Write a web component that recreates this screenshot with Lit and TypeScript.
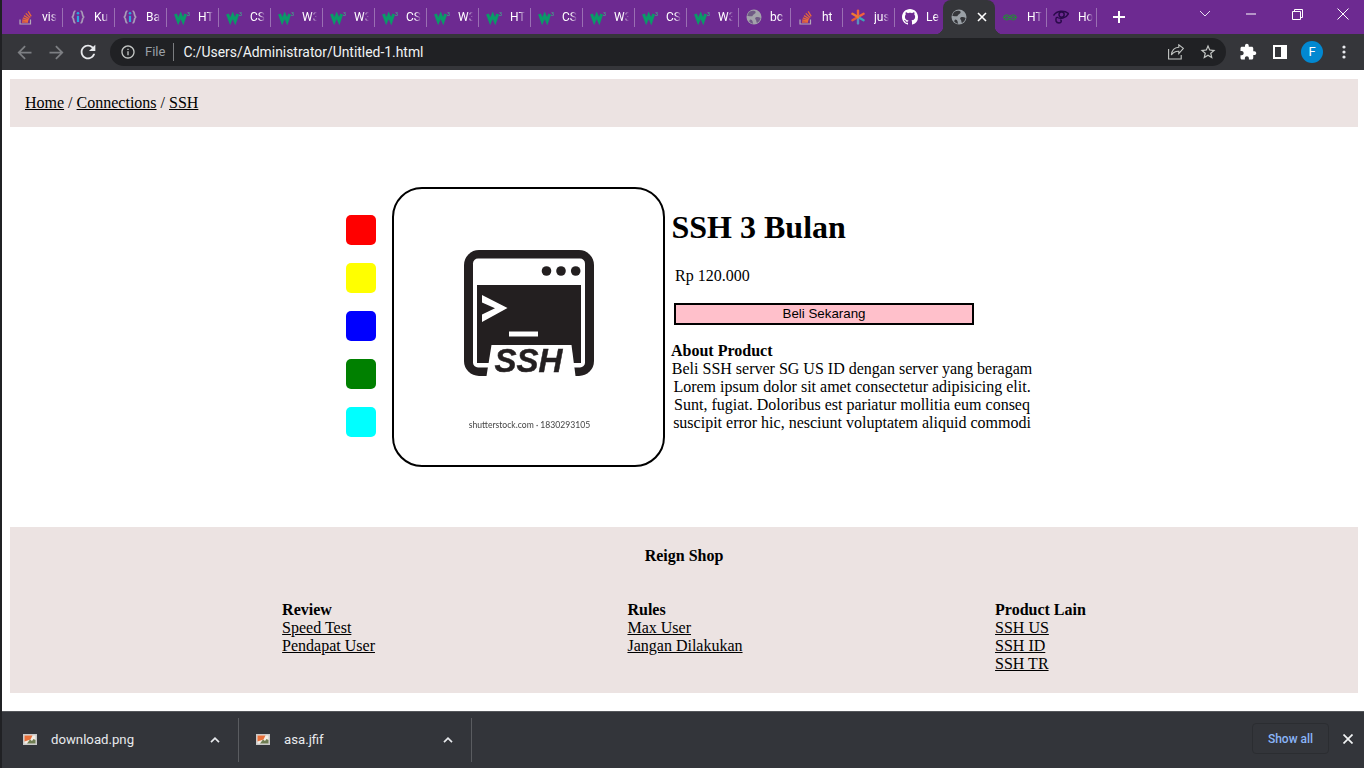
import { html, svg, css, LitElement } from 'lit'
import { customElement } from 'lit/decorators.js'

const p = (d: string, size = 16) =>
  html`<svg class="ico" width=${size} height=${size} viewBox="0 0 24 24" fill="currentColor"><path d=${d}></path></svg>`

const BACK = 'M20 11H7.83l5.59-5.59L12 4l-8 8 8 8 1.41-1.41L7.83 13H20v-2z'
const FORWARD = 'M12 4l-1.41 1.41L16.17 11H4v2h12.17l-5.58 5.59L12 20l8-8z'
const RELOAD =
  'M17.65 6.35A7.958 7.958 0 0012 4c-4.42 0-7.99 3.58-7.99 8s3.57 8 7.99 8c3.73 0 6.84-2.55 7.73-6h-2.08A5.99 5.99 0 0112 18c-3.31 0-6-2.69-6-6s2.69-6 6-6c1.66 0 3.14.69 4.22 1.78L13 11h7V4l-2.35 2.35z'
const INFO =
  'M11 7h2v2h-2zm0 4h2v6h-2zm1-9C6.48 2 2 6.48 2 12s4.48 10 10 10 10-4.48 10-10S17.52 2 12 2zm0 18c-4.41 0-8-3.59-8-8s3.59-8 8-8 8 3.59 8 8-3.59 8-8 8z'
const STAR =
  'M22 9.24l-7.19-.62L12 2 9.19 8.63 2 9.24l5.46 4.73L5.82 21 12 17.27 18.18 21l-1.63-7.03L22 9.24zM12 15.4l-3.76 2.27 1-4.28-3.32-2.88 4.38-.38L12 6.1l1.71 4.04 4.38.38-3.32 2.88 1 4.28L12 15.4z'
const PUZZLE =
  'M20.5 11H19V7c0-1.1-.9-2-2-2h-4V3.5C13 2.12 11.88 1 10.5 1S8 2.12 8 3.5V5H4c-1.1 0-1.99.9-1.99 2v3.8H3.5c1.49 0 2.7 1.21 2.7 2.7s-1.21 2.7-2.7 2.7H2V20c0 1.1.9 2 2 2h3.8v-1.5c0-1.49 1.21-2.7 2.7-2.7 1.49 0 2.7 1.21 2.7 2.7V22H17c1.1 0 2-.9 2-2v-4h1.5c1.38 0 2.5-1.12 2.5-2.5S21.88 11 20.5 11z'
const GITHUB =
  'M8 0C3.58 0 0 3.58 0 8c0 3.54 2.29 6.53 5.47 7.59.4.07.55-.17.55-.38 0-.19-.01-.82-.01-1.49-2.01.37-2.53-.49-2.69-.94-.09-.23-.48-.94-.82-1.13-.28-.15-.68-.52-.01-.53.63-.01 1.08.58 1.23.82.72 1.21 1.87.87 2.33.66.07-.52.28-.87.51-1.07-1.78-.2-3.64-.89-3.64-3.95 0-.87.31-1.59.82-2.15-.08-.2-.36-1.02.08-2.12 0 0 .67-.21 2.2.82.64-.18 1.32-.27 2-.27.68 0 1.36.09 2 .27 1.53-1.04 2.2-.82 2.2-.82.44 1.1.16 1.92.08 2.12.51.56.82 1.27.82 2.15 0 3.07-1.87 3.75-3.65 3.95.29.25.54.73.54 1.48 0 1.07-.01 1.93-.01 2.2 0 .21.15.46.55.38A8.013 8.013 0 0016 8c0-4.42-3.58-8-8-8z'

const LAND =
  'M4 2.4C6 1.6 9 1.6 9.6 3 9.8 5 7 5 6.6 7 5 8 3 6.6 1.4 7 1.6 5 2.6 3.4 4 2.4zM9.6 8.4c1.6-.8 3.6-.4 5 .6-.4 2.2-1.8 4-3.6 5-.8-1-.4-2.6-1.4-3.6-.6-.6-.6-1.4 0-2zM4.4 10.6c1 0 2 .8 2.2 2 .1 1 .4 1.6.6 2.2-1.6-.2-3-1-4-2.2.2-.8.4-1.600 1.2-2z'

const favicons: Record<string, unknown> = {
  so: svg`<path d="M2 10.500V15h10.500v-4.500" fill="none" stroke="#b5a9b8" stroke-width="1.200"/>
    <path d="M4 13h6M4.200 11l6 .8M4.800 8.800l5.800 2M6 6.600l5.200 3.200M7.800 4.400l4.400 4.200M10.200 2.400l3 5" fill="none" stroke="#e8683a" stroke-width="1.300"/>`,
  json: svg`<path d="M5.500 2C2.500 2 4.800 7.400 1.800 8c3 .6.700 6 3.700 6M10.500 2c3 0 .7 5.400 3.700 6-3 .6-.7 6-3.700 6" fill="none" stroke="#a99bb8" stroke-width="1.700"/>
    <path d="M8 6.800V13" stroke="#2aa5de" stroke-width="2.200"/><circle cx="8" cy="4.300" r="1.300" fill="#2aa5de"/>`,
  w3: svg`<path d="M1.500 5l2.700 7.200 2.500-5.800 2.500 5.800L11.700 5" fill="none" stroke="#0a9a68" stroke-width="3"/>
    <text x="13" y="6.500" font-size="5.500" fill="#3fae8c" font-family="Liberation Sans, sans-serif">3</text>`,
  globe: svg`<circle cx="8" cy="8" r="7.500" fill="#a3a3ab"/><path d="${LAND}" fill="#6f5a85"/>`,
  activeGlobe: svg`<circle cx="8" cy="8" r="7.500" fill="#9aa0a6"/><path d="${LAND}" fill="#35363a"/>`,
  star: svg`<g stroke-width="2.400" stroke-linecap="round"><path d="M8 8V1.600" stroke="#f0643c"/><path d="M8 8l5.600-3.200" stroke="#f2603e"/><path d="M8 8l5.600 3.200" stroke="#3aa5b8"/><path d="M8 8v6.400" stroke="#5a8fc0"/><path d="M8 8l-5.600 3.200" stroke="#e25a3a"/><path d="M8 8L2.400 4.800" stroke="#f07a30"/></g>`,
  github: svg`<path d="${GITHUB}" fill="#fff"/>`,
  gfg: svg`<path d="M8 8.300C6.800 5 2.800 5 1.600 8.300h12.800C13.200 5 9.200 5 8 8.300c1.200 3.300 5.200 3.300 6.400 0M8 8.300c-1.200 3.300-5.200 3.300-6.400 0" fill="none" stroke="#2e7d45" stroke-width="1.200"/>`,
  eye: svg`<g fill="none" stroke="#2a0a4a" stroke-width="1.500"><path d="M.5 6.500C4 1.500 11 1 15.500 4.500 13 9.500 7 10.500 3.600 8"/><circle cx="8.600" cy="5.600" r="2.600"/><path d="M3.600 8C2 11 3 14 6 14c2.400 0 3-2.400 1.400-3.400"/></g>`,
}

const tabs = [
  ['so', 'vis'],
  ['json', 'Ku'],
  ['json', 'Ba'],
  ['w3', 'HT'],
  ['w3', 'CS'],
  ['w3', 'W3'],
  ['w3', 'W3'],
  ['w3', 'CS'],
  ['w3', 'W3'],
  ['w3', 'HT'],
  ['w3', 'CS'],
  ['w3', 'W3'],
  ['w3', 'CS'],
  ['w3', 'W3'],
  ['globe', 'bc'],
  ['so', 'ht'],
  ['star', 'jus'],
  ['github', 'Le'],
]

@customElement('browser-chrome')
export class BrowserChrome extends LitElement {
  favicon(name: string) {
    return html`<svg class="fav" width="16" height="16" viewBox="0 0 16 16">${favicons[name]}</svg>`
  }

  tab(icon: string, label: string, extra = '') {
    return html`<div class="tab ${extra}">${this.favicon(icon)}<span class="label">${label}</span></div>`
  }

  render() {
    return html`
      <div class="strip">
        ${tabs.map(([i, l], n) => this.tab(i, l, n === tabs.length - 1 ? 'last' : ''))}
        <div class="tab active">
          ${this.favicon('activeGlobe')}
          <svg class="tab-x" width="10" height="10" viewBox="0 0 10 10"><path d="M1 1l8 8M9 1l-8 8" stroke="#fff" stroke-width="1.600"/></svg>
        </div>
        ${this.tab('gfg', 'HT', 'w51')} ${this.tab('eye', 'Ho', 'w50')}
        <svg class="plus" width="14" height="14" viewBox="0 0 14 14"><path d="M7 1v12M1 7h12" stroke="#fff" stroke-width="2"/></svg>
        <div class="controls">
          <span><svg width="12" height="8" viewBox="0 0 12 8"><path d="M1 1l5 5 5-5" fill="none" stroke="#e8dff0" stroke-width="1"/></svg></span>
          <span><svg width="10" height="2" viewBox="0 0 10 2"><path d="M0 1h10" stroke="#fff"/></svg></span>
          <span><svg width="11" height="11" viewBox="0 0 11 11" fill="none" stroke="#fff"><path d="M.5 2.500h8v8h-8zM2.500 2.500v-2h8v8h-2"/></svg></span>
          <span><svg width="12" height="12" viewBox="0 0 12 12"><path d="M.5.500l11 11M11.500.500l-11 11" stroke="#fff"/></svg></span>
        </div>
      </div>
      <div class="toolbar">
        <span class="btn dim">${p(BACK, 21)}</span>
        <span class="btn dim">${p(FORWARD, 21)}</span>
        <span class="btn">${p(RELOAD, 22)}</span>
        <div class="omnibox">
          <span class="info">${p(INFO, 16)}</span>
          <span class="file">File</span>
          <span class="url">C:/Users/Administrator/Untitled-1.html</span>
          <span class="btn share">
            <svg width="16" height="16" viewBox="0 0 16 16" fill="none" stroke="#c4c7c5" stroke-width="1.100"><path d="M.6 5v10h12.600v-4"/><path d="M15.400 4.400L10.800.8v2.400C6 3.400 3.800 6.400 3.400 11c1.800-2.800 4-4 7.400-3.800v2.400z"/></svg>
          </span>
          <span class="btn star">${p(STAR, 18)}</span>
        </div>
        <span class="btn bright first">${p(PUZZLE, 18)}</span>
        <span class="btn bright">
          <svg width="14" height="14" viewBox="0 0 14 14"><path d="M0 0h14v14H0z" fill="#fff"/><path d="M2 2h6v10H2z" fill="#35363a"/></svg>
        </span>
        <span class="btn"><span class="avatar">F</span></span>
        <span class="btn"><svg width="4" height="14" viewBox="0 0 4 14" fill="#e8eaed"><circle cx="2" cy="2" r="1.600"/><circle cx="2" cy="7" r="1.600"/><circle cx="2" cy="12" r="1.600"/></svg></span>
      </div>
    `
  }

  static styles = css`
    :host {
      display: block;
      font-family: Roboto, sans-serif;
    }
    .strip {
      display: flex;
      align-items: center;
      height: 34px;
      background: #6d2a91;
      padding-left: 8px;
      overflow: hidden;
    }
    .tab {
      display: flex;
      align-items: center;
      flex: 0 0 52px;
      box-sizing: border-box;
      height: 34px;
      padding-left: 8px;
      position: relative;
      color: #fff;
      font-size: 12px;
    }
    .tab::after {
      content: '';
      position: absolute;
      right: -1px;
      top: 8px;
      height: 19px;
      width: 1px;
      background: #9a6fb3;
    }
    .tab.last::after,
    .tab.active::after {
      display: none;
    }
    .fav {
      flex: none;
    }
    .label {
      margin-left: 8px;
      white-space: nowrap;
      -webkit-mask-image: linear-gradient(to right, #000 9px, transparent 15px);
      mask-image: linear-gradient(to right, #000 9px, transparent 15px);
    }
    .tab.active {
      margin-left: -3px;
      background: #35363a;
      border-radius: 8px 8px 0 0;
      z-index: 1;
    }
    .tab.active::before {
      content: '';
      position: absolute;
      left: -8px;
      right: -8px;
      bottom: 0;
      height: 8px;
      z-index: -1;
      background:
        radial-gradient(circle at 0 0, #6d2a91 8px, transparent 8.5px) 0 0 / 8px 8px no-repeat,
        radial-gradient(circle at 100% 0, #6d2a91 8px, transparent 8.5px) 100% 0 / 8px 8px no-repeat,
        linear-gradient(#35363a, #35363a);
    }
    .tab-x {
      margin-left: 10px;
    }
    .tab.w51,
    .tab.w50 {
      padding-left: 7px;
    }
    .tab.w51 {
      flex-basis: 51px;
    }
    .tab.w50 {
      flex-basis: 50px;
    }
    .w51 .label,
    .w50 .label {
      margin-left: 9px;
    }
    .plus {
      margin-left: 16px;
    }
    .controls {
      display: flex;
      margin-left: auto;
      margin-right: -2px;
      margin-top: -6px;
    }
    .controls span {
      display: flex;
      align-items: center;
      justify-content: center;
      width: 46px;
      height: 28px;
    }
    .toolbar {
      display: flex;
      align-items: center;
      height: 36px;
      box-sizing: border-box;
      padding: 0 4px 0 6px;
      background: #35363a;
      color: #e8eaed;
    }
    .btn {
      display: flex;
      align-items: center;
      justify-content: center;
      flex: 0 0 32px;
      height: 28px;
    }
    .btn.dim {
      color: #7d7f83;
    }
    .btn.bright {
      color: #fff;
    }
    .btn.first {
      margin-left: 6px;
    }
    .omnibox {
      display: flex;
      align-items: center;
      flex: 1;
      height: 28px;
      margin-left: 6px;
      padding: 0 2px 0 10px;
      border-radius: 14px;
      background: #202124;
      font-size: 14px;
    }
    .info {
      display: flex;
      color: #c4c7c5;
    }
    .file {
      margin-left: 9px;
      padding-right: 8px;
      border-right: 1px solid #7b7d80;
      color: #9aa0a6;
      line-height: 18px;
      font-size: 13px;
    }
    .url {
      flex: 1;
      margin-left: 9px;
      color: #f1f3f4;
      font-size: 13.9px;
    }
    .star {
      color: #c4c7c5;
    }
    .avatar {
      width: 22px;
      height: 22px;
      border-radius: 50%;
      background: #0288d1;
      color: #fff;
      font-size: 13px;
      line-height: 22px;
      text-align: center;
    }
    .ico {
      display: block;
    }
  `
}

@customElement('download-bar')
export class DownloadBar extends LitElement {
  item(name: string) {
    return html`
      <div class="item">
        <svg class="thumb" width="14" height="11" viewBox="0 0 14 11">
          <path d="M0 0h14v11H0z" fill="#c9c9c9" />
          <path d="M1.500 1.500h11v8h-11z" fill="#f3ede4" />
          <path d="M1.500 1.500h8l-2 4-6 2z" fill="#e8703a" />
          <path d="M4 9.500l3-4 2 1.500 1.500-2 2 1v3.500z" fill="#6e7d52" />
        </svg>
        <span class="name">${name}</span>
        <svg class="chev" width="10" height="6" viewBox="0 0 10 6"><path d="M1 5.200l4-4 4 4" fill="none" stroke="#e8eaed" stroke-width="1.700" /></svg>
      </div>
    `
  }

  render() {
    return html`
      ${this.item('download.png')} ${this.item('asa.jfif')}
      <button>Show all</button>
      <svg class="close" width="10" height="10" viewBox="0 0 10 10"><path d="M.5.500l9 9M9.500.500l-9 9" stroke="#f1f3f4" stroke-width="1.700" /></svg>
    `
  }

  static styles = css`
    :host {
      display: flex;
      align-items: center;
      box-sizing: border-box;
      height: 57px;
      padding-left: 4px;
      background: #33353a;
      border-top: 1px solid #55575b;
      font-family: Roboto, sans-serif;
      color: #e8eaed;
    }
    .item {
      display: flex;
      align-items: center;
      position: relative;
      box-sizing: border-box;
      flex: 0 0 233px;
      height: 44px;
      padding-left: 17px;
      border-right: 1px solid #5a5c60;
    }
    .thumb {
      flex: none;
      margin-top: -2px;
    }
    .name {
      margin-left: 14px;
      font-size: 13.2px;
    }
    .chev {
      position: absolute;
      left: 204px;
      top: 19px;
    }
    button {
      margin-left: auto;
      margin-top: -3px;
      width: 77px;
      height: 31px;
      background: transparent;
      border: 1px solid #2b2d31;
      border-radius: 4px;
      color: #8ab4f8;
      font: 500 12px Roboto, sans-serif;
    }
    .close {
      margin: -2px 11px 0 14px;
    }
  `
}

@customElement('app-root')
export class AppRoot extends LitElement {
  swatches = ['red', 'yellow', 'blue', 'green', 'cyan']

  footer = [
    ['Review', 'Speed Test', 'Pendapat User'],
    ['Rules', 'Max User', 'Jangan Dilakukan'],
    ['Product Lain', 'SSH US', 'SSH ID', 'SSH TR'],
  ]

  render() {
    return html`
      <browser-chrome></browser-chrome>
      <main>
        <nav><a href="#">Home</a> / <a href="#">Connections</a> / <a href="#">SSH</a></nav>
        <section class="product">
          <div class="swatches">
            ${this.swatches.map((c) => html`<span style="background:${c}"></span>`)}
          </div>
          <div class="picture">
            <svg viewBox="394 189 269 276" width="269" height="276">
              <rect x="464" y="250" width="130" height="126" rx="15" fill="#231f20" />
              <rect x="473" y="258.500" width="112" height="109" rx="5" fill="#fff" />
              <path d="M477 285h104v78H477z" fill="#231f20" />
              <circle cx="546.500" cy="271" r="4.800" fill="#231f20" />
              <circle cx="561" cy="271" r="4.800" fill="#231f20" />
              <circle cx="575.700" cy="271" r="4.800" fill="#231f20" />
              <path d="M482 295l25.500 13L482 322v-7.500l13-6.200-13-5.800z" fill="#fff" />
              <path d="M509 331.500h29v5h-29z" fill="#fff" />
              <path d="M491.500 345h80l4 31h-89z" fill="#fff" />
              <text x="494.500" y="372" class="logo-text">SSH</text>
              <text x="529.500" y="428" class="stock">shutterstock.com · 1830293105</text>
            </svg>
          </div>
          <div class="info">
            <h1>SSH 3 Bulan</h1>
            <p class="price">Rp 120.000</p>
            <button>Beli Sekarang</button>
            <div class="about">
              <b>About Product</b>
              <p>
                Beli SSH server SG US ID dengan server yang beragam<br />
                Lorem ipsum dolor sit amet consectetur adipisicing elit.<br />
                Sunt, fugiat. Doloribus est pariatur mollitia eum conseq<br />
                suscipit error hic, nesciunt voluptatem aliquid commodi
              </p>
            </div>
          </div>
        </section>
        <footer>
          <b class="shop">Reign Shop</b>
          <div class="cols">
            ${this.footer.map(
              ([title, ...links]) => html`
                <div class="col">
                  <b>${title}</b>
                  ${links.map((l) => html`<a href="#">${l}</a>`)}
                </div>
              `,
            )}
          </div>
        </footer>
      </main>
      <download-bar></download-bar>
    `
  }

  static styles = css`
    :host {
      display: flex;
      flex-direction: column;
      box-sizing: border-box;
      height: 768px;
      overflow: hidden;
      border-left: 2px solid #202124;
      background: #fff;
      color: #000;
      font: 16px/18px 'Liberation Serif', serif;
    }
    main {
      flex: 1;
      min-height: 0;
      padding: 9px 6px 0 8px;
    }
    a {
      color: #000;
    }
    nav {
      padding: 15px;
      background: #ece3e2;
    }
    .product {
      display: flex;
      align-items: flex-start;
      box-sizing: border-box;
      height: 400px;
      padding: 60px 0 0 336px;
    }
    .swatches {
      display: flex;
      flex-direction: column;
      gap: 18px;
      margin-top: 28px;
    }
    .swatches span {
      width: 30px;
      height: 30px;
      border-radius: 5px;
    }
    .picture {
      width: 269px;
      height: 276px;
      margin-left: 16px;
      border: 2px solid #000;
      border-radius: 30px;
      overflow: hidden;
    }
    .picture svg {
      display: block;
      filter: blur(0.25px);
    }
    .logo-text {
      font: italic 700 33px 'Liberation Sans', sans-serif;
      fill: #231f20;
      stroke: #231f20;
      stroke-width: 0.5px;
    }
    .stock {
      font: 8.6px Lato, sans-serif;
      fill: #444;
      text-anchor: middle;
    }
    .info {
      width: 362px;
      margin-left: 6px;
    }
    h1 {
      margin: 22px 0 21px 0.5px;
      font-size: 32px;
      line-height: 37px;
    }
    .price {
      margin: 0 0 18px 4px;
    }
    .info button {
      display: block;
      box-sizing: border-box;
      width: 300px;
      height: 22px;
      margin-left: 3px;
      padding: 0 0 1px;
      border: 2px solid #000;
      background: pink;
      color: #000;
      font: 13.33px 'Liberation Sans', sans-serif;
    }
    .about {
      margin-top: 17px;
    }
    .about b {
      display: block;
    }
    .about p {
      margin: 0;
      text-align: center;
    }
    footer {
      padding: 20px 0;
      background: #ece3e2;
    }
    .shop {
      display: block;
      text-align: center;
    }
    .cols {
      display: flex;
      justify-content: center;
      gap: 252.5px;
      margin-top: 36px;
    }
    .col {
      display: flex;
      flex-direction: column;
    }
  `
}
